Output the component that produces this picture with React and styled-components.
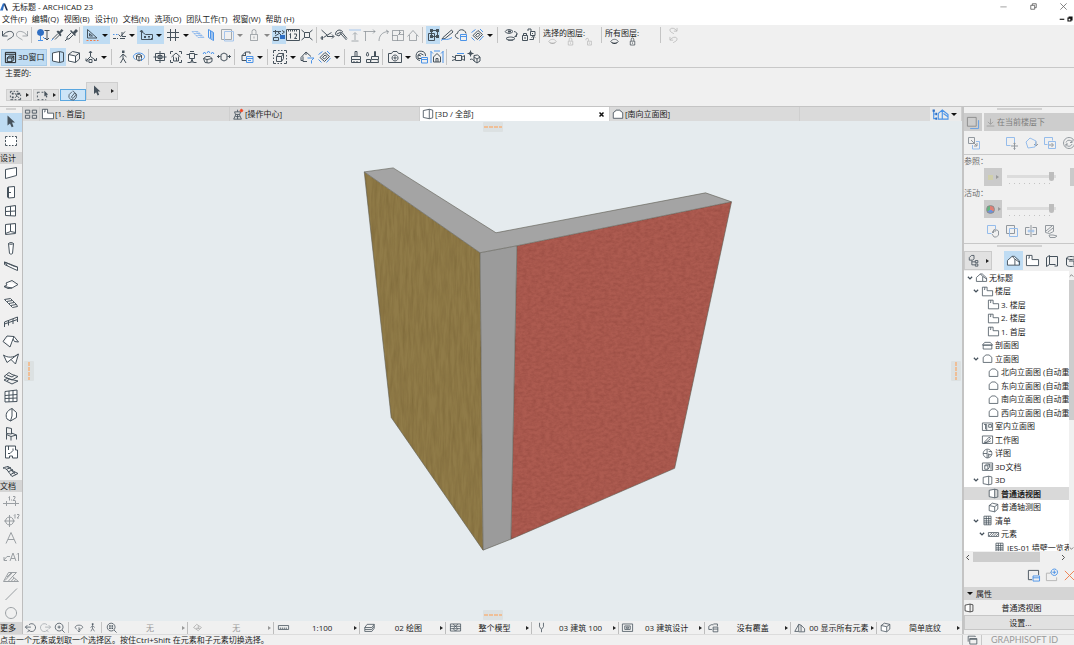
import React, { useState } from "react";
import styled, { createGlobalStyle, css } from "styled-components";

const GlobalStyle = createGlobalStyle`
  * { box-sizing: border-box; }
  body {
    margin: 0;
    background: #f0f0f0;
    color: #1c1c1c;
    font-family: "Open Sans", "Noto Sans CJK SC", sans-serif;
    font-size: 8px;
    line-height: 12px;
    overflow: hidden;
  }
  button, input {
    font: inherit;
    color: inherit;
  }
  ul {
    list-style: none;
    margin: 0;
    padding: 0;
  }
`;

// d: outline, b: blue outline, o: orange outline, f: solid, bf: blue solid, w: white body
const glyphs = {
  logo: { f: "M6 1h3l5 12h-3z", bf: "M0 13L5 1h3l-3 12z" },
  undo: { d: "M1.5 3v5h5M2 7.5C5 2.5 12.5 2 12.5 6.5 12.5 9.5 9 10 6.5 12" },
  redo: { d: "M12.5 3v5h-5M12 7.5C9 2.5 1.5 2 1.5 6.5 1.5 9.5 5 10 7.5 12" },
  find: { d: "M8.5 2.5h5M11 3v9M9 10l2 2 2-2", b: "M4.5 8v4.500M2 12.500h5M7 9l2 2", bf: "M4.5 1a3.500 3.500 0 1 0 .1 0z" },
  pipette: { d: "M8 5.5l-5.5 5.5M9.5 7L5 11.5", b: "M1.5 12.5l2-2", f: "M6.500 3.500l1.500-1 1.500 1L11.500 1 13.500 2.500 10.500 5.500l1 1.500-1 1.500z" },
  syringe: { d: "M7.500 4.500L3 9v2h2l4.500-4.500M1 13l2-2", f: "M6 3l1-1 5 5-1 1zM9 4l3-3 2 2-3 3z" },
  ruler: { d: "M2.500 1.500v8.500h9.500zM4.500 5.500v2.500h3z", o: "M1.500 12.500h2M5 12.500h2M8.500 12.500h2M12 12.500h1.500" },
  guide: { d: "M1 10.500h3M5 10.500h1M8 10.500h5M6.500 6.500l2 2L13 3.500M10 4v4.500h4", b: "M1 6.500h1.500M4 6.500h1.500" },
  coords: { d: "M2.500 2.500v9h11v-5h-7l-4-3M1 4l1.500-2L4 4M5 8l2 2M7 8l-2 2M9 8l1 1 1-1M10 9v1.500M12 10.500h1" },
  grid: { d: "M4.500 1v12M9.500 1v12M1 4.500h12M1 9.500h12" },
  plane: { b: "M1 3.500h6l6 6H7zM3 5.500h6M5 7.500h6M5 3.500l6 6" },
  slab: { b: "M4.500 1.500l5 3v8l-5-3zM6.500 3v7M8 4v7" },
  frame: { d: "M1.500 1.500h10v10h-10z", b: "M4.500 3.500h9v9.500h-9z" },
  lock: { d: "M3.500 6.500h7v6h-7zM5 6V3.500a2 2 0 0 1 4 0V6M7 8.500v2" },
  magnet: { d: "M1 3.500h8M3.500 2v4M10 2.500l2.500 1.500-2.500 2M1.500 9.500h5v3h-5zM3 8l5-3M6 4l3 3", bf: "M8 7h5v4H8z" },
  scale: { d: "M.5 1.500h13v11h-13zM2.500 1.500v2M4.500 1.500v2M6.500 1.500v2M8.500 1.500v2M10.500 1.500v2M3.500 6.500l1-1v5M8 6h2.500v2L8.500 10.500H11" },
  collapse: { d: "M4.500 4.500h5v5h-5zM1.500 2l3 2.500M12.500 2l-3 2.500M1.500 12l3-2.500M12.500 12l-3-2.500" },
  split: { d: "M1.500 2l6 5.500M3.500 9.500l8-5M7 8.500h6.500M12 6.500l2 2-2 2M2.500 8.500a1.500 1.500 0 1 0 .1 3z" },
  axe: { d: "M6.500 5.500l6 6.500M8 4.500l5 6M1.500 6.500c0-4 4-6 7-3L5 8zM3 6l4-2" },
  stretch: { d: "M3.500 13h7M7 12V5M5 6.500L7 4.500l2 2", b: "M1 2h12" },
  corner: { d: "M3.500 13V3.500H13M1.500 3.500h2M11 1.500l2 2-2 2" },
  arc: { d: "M3 13C3 8 6 4 12 3.500M10 2l2.500 1.500L11 6" },
  resize: { d: "M1.500 2.500h11v10h-11zM1.500 7.500h5v5M8.500 2.500v4h4M7 7l3-3" },
  roof: { d: "M1.500 8.500L7 2.500l5.500 6M3.500 7v5.500h7V7" },
  group: { d: "M5.500 2.500h6v6h-6zM2.500 5.500h6v7h-6z", f: "M4 1h3v3H4zM10 1h3v3h-3zM4 7h3v3H4zM10 7h3v3h-3z" },
  pencil: { d: "M3 9.500L11.500 2l1.500 2-8 6.500-3 .5z", b: "M1 12.500c3-3 5 1 11-3" },
  cloud: { d: "M4.500 10.500C.5 10 .5 5.500 3.500 5.500 4 .5 11 .5 12 5.500", b: "M6.500 6.500h6v6h-6zM6.500 8.500h6" },
  diamond: { d: "M3 7.500l5-5 4.500 4-5 5zM5.500 7.500L8 5l2 1.500-2.500 2.500z", b: "M1.500 4.500l4-3M1.500 9.500l3 3M13.500 8l-4 4.500M13 4l-3-3" },
  eyes: { d: "M1 3.500c2-2.500 6-2.500 8 0-2 2.500-6 2.500-8 0zM2 10.500c2-2 7-2 9 0-2 2.500-7 2.500-9 0zM10 3.500c4 1 4 3 1 5M12.500 5.500v3h-2", f: "M4 2.500h3v2H4zM4 11.500h5v1H4z" },
  locks: { d: "M.5 7.500h5v5h-5zM1.500 7V5.500h3V7M8.500 3.500h4.500v4H8.500zM6 3V1h3v2.500M7.500 11.500h4V9M9.500 9.500l2-1.500 1.500 1.500M3 9v2M10.500 5v1" },
  eye: { d: "M1 7c3-4.500 9-4.500 12 0-3 4-9 4-12 0z", f: "M2.500 8.500c2 3 7 3 9 0l1-1.500c-2 2.500-9 2.500-11 0z" },
  unlock: { d: "M5.500 6.500h6v6h-6zM7 6V4a2 2 0 0 0-4 0v1M8.500 8.500v2" },
  window3d: { d: "M1.500 1.500h11v11h-11zM1.500 3.500h11M3.500 7.500h5v4h-5zM3.500 7.500l2-2h5l-2 2M10.500 5.500v4l-2 2" },
  persp: { w: "M2 3l6-1.500v11L2 11z", d: "M1.500 3l7-1.500v11l-7-1.500zM8.500 1.500l4 1v9l-4 1" },
  axon: { w: "M2 5h7v8H2z", d: "M1.500 4.500l7 1.500v6.500l-7-1.500zM1.500 4.500l4-3 7 1.500-4 3M12.500 3v6l-4 3.500" },
  axes: { d: "M6.500 1.500v5L2 11M6.500 6.500l5.500 4M5 3l1.500-2L8 3M2 8.500V11h2.500M12.500 8v2.500H10M5 9.500h3v3H5z" },
  walk: { d: "M7 4v4.500L4.500 13M7 8l3 5M4 7.500l3-3.500 3.500 3", f: "M6 .5h2.500v2.500H6z" },
  orbit: { d: "M4.500 5.500L7 4l2.500 1.500v4L7 11 4.500 9.500zM4.500 5.500L7 7l2.500-1.500M7 7v4", b: "M3.500 9.500C-1 7 2.500 3 7 3s8 4 3.500 6.500M9 8l1.500 1.500L9 11" },
  target: { d: "M2.500 3.500h9v7h-9zM7 1v12M.5 7h13M5 5.500h4v3H5z" },
  housebox: { d: "M1.500 4V1.500H4M10 1.500h2.500V4M12.500 10v2.500H10M4 12.500H1.500V10M2.500 7L7 3l4.500 4M4.500 6.500v4.500h5V6.500M6.500 8h1v3" },
  tripod: { d: "M4.500 3.500h5v5h-5zM1.500 4.500h3M9.500 4.500h3M7 8.500V13M2.500 12.500h3l1.500-3 1.500 3h3M5 1.500h4" },
  cloudup: { d: "M2.500 8.500L5 6.500h4l2 2v3L8 13l-4-.5zM2.500 8.500L6 9.500l5-1M6 9.500V13", b: "M2 4l1.500-2L5 4M6 3l1.500-2L9 3M10 4l1.500-2L13 4" },
  sectionbox: { d: "M0 6.500h3.500M10.500 6.500H14M4 4.500L7 3l3 1.500v5L7 11 4 9.500zM1.500 5v3M12.500 5v3" },
  copybox: { d: "M2 5.500L5.500 2H10v2M2 5.500v5h4M5.500 2v3M2 5.500h4", b: "M6.500 6.500h6.500v6h-6.500zM6.500 8.500h6.500M8 10.500h3" },
  marqueecube: { d: "M.5 3V.5H3M5 .5h1.500M8 .5h1.500M11 .5h2.500V3M13.500 5v1.500M13.500 8v1.500M13.500 11v2.500H11M9 13.500H7.500M6 13.500H4.500M3 13.500H.5V11M.5 9V7.500M.5 6V4.500M3.500 6.500h5v5h-5zM3.500 6.500l2-3h5l-2 3M10.500 3.500v5l-2 3" },
  homefilter: { d: "M1 7.500l5-5.500 5 4.500M3 6.500v5h4M1 7.500v3h2M6 2v3", b: "M7.500 8h6.500L11.500 10.500v3" },
  brush: { d: "M6 1.500h2v5M6 1.500v5M2.500 6.500h9v3h-9zM2.500 9.500v3h9v-3M5 11v1.500M8 11v1.500" },
  brushes: { d: "M2.500 2C1 4.500 1 6 2.500 6S4 4.500 2.500 2zM1.500 9.500h4v3h-4zM9.500 1.500h1v5M9.500 1.500v5M6.500 6.500h7v3h-7zM6 9.500l-.5 3h8l-.5-3" },
  camera: { d: "M.5 3.500h3l1.500-2h4l1.500 2h3v9H.5zM7 5a3 3 0 1 0 .1 0zM7 7a1 1 0 1 0 .1 0z" },
  orbitcopy: { d: "M6 10.500A4.700 4.700 0 1 1 11.500 6M4 5l2.500-1.500 3 1.500M4 5v3.500h3M4 5l3 1", b: "M7.500 7.500h6v5.500h-6zM7.500 9.500h6" },
  planhouse: { d: "M3.500 7L7 3.500 10.500 7v5h-7zM6 12V8.500h2V12", b: "M1 1v12M13 1v12M1 1.500l2 2M13 1.500l-2 2M4 1h6" },
  video: { d: "M4.500 5.500h6v5h-6zM10.500 7.500l3-2v5l-3-2M1 6.500l3 1M1 10.500l3-1", b: "M6 3.500h7" },
  gears: { d: "M3.500 2a1.500 1.500 0 1 0 .1 0zM3.500.5v6M.5 3.500h6M7 5.500l3.500-.5L13 7v4l-3 2-3-2zM7 7l3 2 3-2M10 9v4M3 9.500c2-1 3 0 4 1.500" },
  pick: { d: "M1.500 4.500v-2h2M5 2.500h1.500M8 2.500h2M1.500 11.500h3M6 11.500h2M10 11.500h2.500v-2M1.500 7v2M12.500 6v1.500M6.500 4.500l2 3-2 2M9 8l2 1.500M8 5.500h3", f: "M3 4h2v2H3zM3 8h2v2H3zM9 4h3v2H9z" },
  marquee: { w: "M2 3h10v8H2z", d: "M1.500 4.500v-2h2M5 2.500h1.500M8 2.500h1.500M11 2.500h1.500v2M12.500 6v2M12.500 9.500v2H11M9.500 11.500H8M6.500 11.500H5M3.500 11.500h-2v-2M1.500 8V6" },
  marqueepick: { d: "M1.500 5V3.500H4M6 3.500h2M1.500 7v2M1.500 11.500h2M6 11.500h2M10 11.500h1M11.500 9V7", f: "M9 2l4 4-2 .5 1 2-1 .5-1-2-1 1z" },
  clip: { d: "M9 4.500a4.500 4.500 0 1 1-6.500 2L6 3M5 9.500l4-5 2 1.500-4 5zM7 2l2 2.500" },
  arrow: { f: "M3.500.5l7.500 7H8l1.500 4-1.800.8-1.700-3.800-2.500 2z" },
  overview: { d: "M.5 2.500h5v3.500h-5zM8.500 2.500h5v3.500h-5zM.5 8.500h5v3.500h-5zM8.500 8.500h5v3.500h-5z" },
  story: { w: "M1 2h5v4h7v6H1z", d: "M.5 1.500h6v4.500h7v6.500H.5zM3.500 1.500v3h-1" },
  house: { w: "M1 7l5-5 6 5v5H1z", d: "M.5 12v-5l5-4.500 3 3V12zM5.500 2.500h2.500l5.500 5V12h-5M8.500 5.500l5 3.500" },
  elevation: { w: "M1.500 6L7 2.500 12.500 6v6h-11z", d: "M1.500 12V5.500l3.500-3h4l3.500 3V12z" },
  section: { w: "M1.500 6h11v6h-11z", d: "M1.500 11.500v-5h11v5zM.5 6.500l3-3.500h7l3 3.500z" },
  interior: { d: "M.5 2.500h13v9.500H.5zM2.500 4.500h3.500v7.500M4.500 4.500v6M8.500 4.500h3.500v3.500H8.500z" },
  worksheet: { d: "M.5 2.500h13v9.500H.5zM3 10.500L9 4l2 1.500-6 5.500zM2 12l9-3" },
  detail: { d: "M7 1.500a5.500 5.500 0 1 0 .1 0zM1.500 7h5M6.500 2v11M8.500 4.500h4M8.500 7v5M8.500 8.500h4" },
  doc3d: { d: "M.5 2.500h13v9.500H.5zM3.500 6h4v4.500h-4zM3.500 6l2-2h4l-2 2M9.500 4v4l-2 2.500M11.500 4v7" },
  schedule: { d: "M2.500 1.500h9v11h-9zM2.500 4.500h9M2.500 7.500h9M2.500 10h9M5.500 1.500v11M8.500 1.500v11" },
  hatch: { d: "M.5 4.500h13v5H.5zM1 9l4-4M4 9l4-4M7 9l4-4M10 9l3.500-3.500" },
  actioncenter: { d: "M3 4.500h7l-1 3H4zM4.500 7.500L2 13h9l-2.500-5.500M4 10h5M6.500 2v2.500M6.500 8v5", r: "M11 1.500a1.500 1.500 0 1 0 .1 0z" },
  navhouse: { b: "M1.500 4v7h2M1.500 7h2M5.500 11.500V6.500L9 3.500l5 4v4zM9 3.500v8M10 6.500l4 3", bf: "M.5 3h2v2h-2zM3 6h1.500v2H3zM3 10h1.500v2H3z" },
  wall: { w: "M1 4l11-3v9L1 13z", d: "M1.500 3.500l11-2v8l-11 3z" },
  door: { w: "M4 2h6v11H4z", d: "M4.500 2l6-.5v11l-6 .5zM4.500 2l-1 .5V12l1 1M5 7.500h2" },
  win: { w: "M2 3h10v9H2z", d: "M1.500 3l10-1.500v10.500l-10-.5zM6.500 2v10M1.500 7.500l10-.5" },
  corwin: { w: "M2 3h10v9H2z", d: "M1.500 2.500l10-1v10l-10 1zM6.500 2v7.500M1.500 11.500l5-2 5 1" },
  column: { w: "M5 2h4v11H5z", d: "M4.500 2.500l1 10c1 .8 2 .8 3 0l1-10c-1-1.200-4-1.200-5 0 1 1 4 1 5 0" },
  beam: { w: "M1 3l12 5v3L1 6z", d: "M.5 3l13 5v3.500L10 10 .5 5.500zM.5 3l3 3.500M.5 3l10 4.500 3 .5" },
  slabtool: { w: "M1 8l4-4 8 3-4 3z", d: "M0 8.500l3-1.500-1-2 6-2.500 6 4-6 3.500zM0 8.500l4 2 4-.5" },
  stair: { w: "M2 3l11 7-4 2-7-6z", d: "M.5 3.500l6-1 2 2-6 1zM2.500 5.500l2 2 6-1-2-2M4.500 7.500l2 2 6-1-2-2M6.500 9.500l2 2 5-1-1-2" },
  rail: { d: "M.5 7l13-5v5M.5 7v5M.5 9l13-4.500M4.500 5.500v5M9 4v5" },
  rooftool: { w: "M1 7l4-5 5 1 3 5-3-1-4 5z", d: "M-1 7.500l4-5.500 7 .5 4.500 5.500-4-.5L9 5l-3 8zM10 2.500L9 5" },
  shell: { w: "M1 3c3 3 8 3 12-1l-2 9-4-4-4 4z", d: "M-.5 3c4 3 10 3 15-1l-3 10-4.500-4.500-4 3zM7 7.500l7-5.500" },
  mesh: { d: "M0 5.500l5-4 3 2 6 2-6 3.500zM0 9l3-1.500 11 2.500-6 3zM3 4l5 2 3-2M3 10l2-1.500" },
  curtain: { w: "M1 2h11v10H1z", d: "M1 2.500l12-1.500v11.500l-12 .5zM5 2v11M9 1.500v11M1 6.500l12-1M1 9.500l12-.5" },
  morph: { w: "M3 5l5-3 4 3-1 5-4 3-4-3z", d: "M8 .5C2.500 2.500 1 7 3 11l3.500 2L8 8 8 .5l4.500 4v5l-6 3.500" },
  chair: { d: "M2.500.5l5 1v5.500l-5-.5zM2.500 6.500v6M2.500 7.500L7 9.500v4M7 9.500l5.500-1.500v4.500M7.500 6l5 2" },
  zone: { w: "M2 2h9v3h2v7H2z", d: "M1.500 1h10v4h2v8h-5v-2h-3v2h-4zM4.500 1v4M4 8.500h2l3-3v-2" },
  meshcurve: { d: "M-1 4c5-2 6-2 10 3l5 2.500M-1 4c4 0 6 5 9 8.500l6-3M3 2.500c3 0 5 6 9 8.500M2 5.500l5-2M4 8l5-2.500M6 11l5-3" },
  dimension: { d: "M-1 9.500h16M2.500 7v5M11.500 7v5M4.500 3.500l1-1v4M7.500 5.500v1M9 2.500h2v1.500L9 6.500h2.500" },
  level: { d: "M5.500 4a4 4 0 1 0 .1 0zM5.500 2v12M0 8h11M10 2.500l1-1v4M13 1.500h2V3l-2 2h2" },
  textA: { d: "M2 12.500l5-11 5 11M4 8.500h6" },
  label: { d: "M0 10l3-3.500h3M0 7v3.500h3M6 11l3-8 3 8M7 8.500h4M13 4.500l1.500-1.500v8" },
  fill: { d: "M-.5 12.500l5-9h8l-4 4 6 5zM1 11.500l7-7.500M4 12.500l5-5.500M7 12.500l3-3.500M10 12.500l1.500-2M3 8l4-4" },
  line: { d: "M1.500 13L13 1.500" },
  circle: { d: "M7 1.500a5.500 5.500 0 1 0 .1 0z" },
  zoomprev: { d: "M5 3.500a5 5 0 1 1-1 6M3 13l3-3M.5 6.500h7M3 4l-2.500 2.500 2.500 2.500" },
  zoomnext: { d: "M9 3.500a5 5 0 1 0 1 6M11 13l-3-3M13.500 6.500h-7M11 4l2.500 2.500-2.500 2.500" },
  zoomin: { d: "M6.500 1.500a5 5 0 1 0 .1 0zM10 10l3.500 3.500M4.500 6.500h4M6.500 4.500v4" },
  zoomfit: { d: "M6.500 1.500a5 5 0 1 0 .1 0zM10 10l3.500 3.500", f: "M4 4h2v2H4zM7 4h2v2H7zM4 7h2v2H4zM7 7h2v2H7z" },
  pan: { d: "M4 8.500C-.5 7 2 3 7 3s7.500 4 2 5.500L7 9M7 6v6M5 10.500l2 2 2-2" },
  rulerbar: { d: "M.5 4.500h13v5H.5zM3 9V7M5.500 9V7M8 9V7M10.500 9V7" },
  layers: { d: "M1 7l3-4h9l-3 4zM1 9.500v-2.500M1 9.500h9l3-4V3M1 9.500V12h9l3-4V5.500" },
  model: { d: "M.5 2.500h13v9H.5zM.5 5.500h13M.5 8.500h13M4 2.500l3 3-3 3 3 3M10 2.500l-3 3 3 3-3 3" },
  pen: { d: "M4.500 1v5l2.500 3.500 2.500-3.500V1M7 9.500V13" },
  mvo: { d: "M.5 2.500h13v9.500H.5zM3.500 5h7v4.500h-7zM5.500 6.500h3v1.500h-3z" },
  override: { d: "M1 9.500V5.500l3-2h3M6.500 6.500h6v6h-6zM6.500 9h6M7 2.500h5v3M1 9.500h4" },
  reno: { d: "M1 12L6 3v9zM6 12.500h7.500v-4L9 4v8M6 3l3 1" },
  rotateq: { d: "M2 7l4-4 6 4-4 4zM5 8h5M8 5v4" },
  trace: { d: "M1.500 1.500h9.500v9.500h-9.500z", b: "M13.500 4.500v9h-9" },
  download: { d: "M7 1v8.500M3 6l4 4 4-4M1 12.500h12" },
  swap: { d: "M1.500 1.500h6v6h-6zM4 4l6 6M10 7v3H7", b: "M9 5.500h3.500v7.500h-7V9" },
  moveref: { b: "M1.500 1.500h8v5M1.500 1.500v8h4", d: "M9.500 6.500v7M6 10h7M8.500 7.500l1-1 1 1M8.500 12.500l1 1 1-1" },
  rotref: { b: "M2 6l4-4 6 3-1 6-7 1z", d: "M12 5.500v4M10 8l2 2 2-2" },
  copyref: { b: "M1.500 1.500h8v3M1.500 1.500v7h3M5.500 5.500h7v7h-7z", d: "M6 9h4M8.500 7l2 2-2 2" },
  refresh: { d: "M7 1.500a5.500 5.500 0 1 0 .1 0zM4 6.500c1-3 5-3 6 0M10 8c-1 3-5 3-6 0M10 4v2.500H8M4 10.500V8h2" },
  handref: { b: "M9.500 5v-3.500h-8v8h4", d: "M6.500 9V7.500l1-1V9M7.500 8V6l1.500-.5V8M9 6h2l1.500 1v4l-2 2H8l-2-3" },
  overlap: { d: "M1.500 1.500h8v8h-8z", b: "M4.500 4.500h8v8h-8z" },
  mirror: { d: "M7 1v12M5.500 3.500h-4v7h4M8.500 3.500h4v7h-4", b: "M3.500 7h7M5 5.500v3M9 5.500v3" },
  handfill: { d: "M2.500 1.500h8v6l-4 2-4-1zM3 7l6-5M5 8l5-4M6 11h4l4 1-2 1.500H7z" },
  orgtree: { d: "M4 .5L1.500 3v3h4l1.500-1.500v-4zM4.500 6.500v5H8M8.500 6.500h3v2.500h-3zM8.500 10.500h3v2.500h-3zM4.500 8h4" },
  layout: { d: "M1.500 3.500l3-2v9l-3 2zM4.500 2.500h8v8M4.500 10.500h6M12.500 8v4h-3" },
  publish: { d: "M2.500 4v7c1 2 8 2 9 0V4M2.500 4c1-2 8-2 9 0-1 2-8 2-9 0M5 7h5v4" },
  saveview: { d: "M1.500 1.500h11v5M1.500 1.500v10h4", b: "M6.500 7.500h7v5.500h-7zM6.500 9.500h7" },
  newview: { d: "M1.500 12.500v-8h4l1-1.500M12.500 9v3.500h-11", b: "M10 0a3.500 3.500 0 1 0 .1 0zM8 3.500h4M10 1.500v4" },
  remove: { o: "M2 2l10 10M12 2L2 12" },
  stack: { d: "M1.500 8.500v-7h9v1M3.500 10.500v-6h9v7h-9zM3.500 5.500h9" },
  minimize: { d: "M3 7.500h8" },
  restore: { d: "M3.500 5.500h5v5h-5zM5.500 5.500v-2h5v5h-2" },
  close: { d: "M3 3l8 8M11 3l-8 8" },
  chevron: { d: "M2 4l5 5 5-5" },
};

const Svg = styled.svg`
  display: block;
  flex: none;
  fill: none;
  stroke-width: ${(p) => p.$weight};
  overflow: visible;
`;

const Icon = ({ name, size = 14, weight = 1 }) => {
  const g = glyphs[name];
  return (
    <Svg viewBox="0 0 14 14" width={size} height={size} $weight={weight} aria-hidden="true">
      {g.w && <path d={g.w} fill="#fff" />}
      {g.d && <path d={g.d} stroke="currentColor" />}
      {g.b && <path d={g.b} stroke="#4b93e8" />}
      {g.o && <path d={g.o} stroke="#f07c4a" />}
      {g.f && <path d={g.f} fill="currentColor" />}
      {g.bf && <path d={g.bf} fill="#2f6fc4" />}
      {g.r && <path d={g.r} fill="#f4411e" stroke="#f4411e" />}
    </Svg>
  );
};

const Window = styled.div`
  display: flex;
  flex-direction: column;
  height: 100vh;
`;

const TitleBar = styled.header`
  display: flex;
  align-items: center;
  height: 13px;
  background: #fff;
  color: #20304f;
`;

const Title = styled.h1`
  flex: 1;
  margin: 0 0 0 4px;
  color: #1c1c1c;
  font-size: 8px;
  font-weight: 400;
`;

const WindowButtons = styled.div`
  display: flex;
  gap: ${(p) => p.$gap || 0}px;
  padding-right: ${(p) => p.$end || 0}px;
`;

const PlainButton = styled.button`
  display: flex;
  align-items: center;
  justify-content: center;
  flex: none;
  padding: 0;
  border: 0;
  background: none;
  color: ${(p) => p.$color || "#46525c"};
`;

const MenuBar = styled.nav`
  display: flex;
  align-items: center;
  justify-content: space-between;
  height: 12px;
  padding-left: 2px;
  background: #fff;
`;

const MenuList = styled.ul`
  display: flex;
  gap: 5px;
`;

const MenuLink = styled.a`
  color: inherit;
  text-decoration: none;
  white-space: nowrap;
`;

const Toolbars = styled.div`
  height: 43px;
  border-bottom: 1px solid #c8c8c8;
  overflow: hidden;
`;

const ToolRow = styled.div`
  display: flex;
  align-items: center;
  height: ${(p) => p.$height}px;
  padding-left: 1px;
`;

const ToolButton = styled.button`
  display: flex;
  flex: none;
  align-items: center;
  justify-content: center;
  width: ${(p) => p.$w}px;
  height: 18px;
  padding: 0;
  border: 0;
  background: ${(p) => (p.$active ? "#bfdcf3" : "transparent")};
  color: #46525c;
  ${(p) => p.$dim && css`svg { opacity: 0.45; }`}
`;

const IconSlot = styled.span`
  display: flex;
  flex: 1;
  justify-content: center;
  min-width: 0;
`;

const Caret = styled.span`
  width: 0;
  margin: 0 2px 0 1px;
  border: 3px solid transparent;
  border-bottom-width: 0;
  border-top-color: ${(p) => (p.$dim ? "#888" : "#111")};
`;

const SideCaret = styled.span`
  border: 2px solid transparent;
  border-right-width: 0;
  border-left: 3px solid ${(p) => (p.$dim ? "#999" : "#222")};
`;

const Separator = styled.span`
  flex: none;
  width: 1px;
  height: ${(p) => p.$height || 16}px;
  margin: 0 3px 0 2px;
  background: #c4c4c4;
`;

const View3dButton = styled.button`
  display: flex;
  align-items: center;
  gap: 1px;
  height: 17px;
  width: 46px;
  margin: 0 3px 0 0;
  padding: 0 2px;
  border: 1px solid #a9cdea;
  background: #bfdcf3;
  white-space: nowrap;
`;

const LayerGroup = styled.div`
  width: ${(p) => p.$w}px;
  height: 19px;
`;

const LayerTitle = styled.div`
  height: 11px;
  line-height: 13px;
  white-space: nowrap;
`;

const LayerIcons = styled.div`
  display: flex;
  gap: 9px;
  padding-left: 5px;
`;

const InfoBox = styled.section`
  height: 39px;
  padding-left: 5px;
  border-bottom: 1px solid #c4c4c4;
`;

const InfoLabel = styled.div`
  height: 10px;
  line-height: 10px;
`;

const InfoButtons = styled.div`
  display: flex;
  align-items: flex-end;
  height: 23px;
  padding-left: 1px;
`;

const InfoButton = styled.button`
  display: flex;
  align-items: center;
  justify-content: center;
  gap: ${(p) => (p.$tall ? 8 : 4)}px;
  width: ${(p) => (p.$tall ? 32 : 26)}px;
  height: ${(p) => (p.$tall ? 18 : 12)}px;
  margin: ${(p) => (p.$tall ? "0 0 1px" : p.$active ? 0 : "0 1px 0 0")};
  padding: 0;
  border: 1px solid ${(p) => (p.$active ? "#5aa7e0" : "#cfcfcf")};
  background: ${(p) => (p.$active ? "#cce4f7" : "#e1e1e1")};
  color: #46525c;
`;

const Body = styled.div`
  display: flex;
  flex: 1;
  min-height: 0;
`;

const Toolbox = styled.aside`
  display: flex;
  flex-direction: column;
  width: 23px;
  border-right: 1px solid #bdbdbd;
`;

const Grip = styled.div`
  flex: none;
  width: ${(p) => p.$w}px;
  height: 2px;
  margin: 1px auto 3px;
  background: #d2d2d2;
`;

const ToolboxTool = styled.button`
  display: flex;
  flex: 1 1 0;
  align-items: center;
  justify-content: center;
  min-height: 0;
  padding: 0;
  border: 0;
  background: ${(p) => (p.$active ? "#bfdcf3" : "transparent")};
  color: ${(p) => (p.$dim ? "#9a9fa3" : "#46525c")};
`;

const ToolboxLabel = styled.div`
  flex: none;
  height: 12px;
  margin-top: ${(p) => (p.$spaced ? 2 : 0)}px;
  background: #d5d5d5;
  white-space: nowrap;
  overflow: hidden;
`;

const Workspace = styled.main`
  display: flex;
  flex: 1;
  flex-direction: column;
  min-width: 0;
`;

const TabBar = styled.div`
  display: flex;
  flex: none;
  height: 14px;
  background: #dadada;
`;

const Tab = styled.button`
  display: flex;
  flex: 0 1 190px;
  align-items: center;
  gap: 1px;
  min-width: 0;
  padding: 0 4px 0 2px;
  border: 0;
  border-right: 1px solid #cfcfcf;
  background: ${(p) => (p.$active ? "#fff" : "transparent")};
  color: #46525c;
  white-space: nowrap;
`;

const TabName = styled.span`
  flex: 1;
  color: #1c1c1c;
  text-align: left;
`;

const TabClose = styled.span`
  color: #111;
`;

const TabEnd = styled.span`
  flex: 1 1 0;
`;

const CornerButton = styled.button`
  display: flex;
  flex: none;
  align-items: center;
  justify-content: center;
  gap: 2px;
  width: ${(p) => p.$w}px;
  padding: 0;
  border: 0;
  border-right: 1px solid #cfcfcf;
  background: ${(p) => (p.$light ? "#ebebeb" : "transparent")};
  color: #46525c;
`;

const Viewport = styled.div`
  position: relative;
  flex: 1;
  min-height: 0;
  background: #e5ebee;
`;

const Scene = styled.svg`
  display: block;
  width: 100%;
  height: 100%;
`;

const edges = {
  top: css`top: 1px; left: 50%; width: 20px; height: 10px; margin-left: -10px;`,
  bottom: css`bottom: 1px; left: 50%; width: 20px; height: 10px; margin-left: -10px;`,
  left: css`left: 1px; top: 50%; width: 10px; height: 20px; margin-top: -10px;`,
  right: css`right: 1px; top: 50%; width: 10px; height: 20px; margin-top: -10px;`,
};

const dashes = (angle) => css`
  background: repeating-linear-gradient(${angle}, #efbf97 0 4px, transparent 4px 5px);
`;

const EdgeHandle = styled.span`
  position: absolute;
  display: flex;
  align-items: center;
  justify-content: center;
  border-radius: 1px;
  background: #dce1e2;
  ${(p) => edges[p.$side]}

  &::after {
    content: "";
    ${(p) =>
      p.$side === "top" || p.$side === "bottom"
        ? css`width: 18px; height: 2px; ${dashes("90deg")}`
        : css`width: 2px; height: 18px; ${dashes("180deg")}`}
  }
`;

const QuickOptions = styled.div`
  display: flex;
  flex: none;
  align-items: center;
  height: 13px;
`;

const QuickTools = styled.div`
  display: flex;
  align-items: center;
  width: 79px;
`;

const QuickSelector = styled.button`
  display: grid;
  grid-template-columns: 18px 1fr 7px;
  flex: 1 1 0;
  align-items: center;
  justify-items: center;
  min-width: 0;
  height: 12px;
  padding: 0;
  border: 0;
  border-right: 1px solid #bdbdbd;
  background: none;
  color: ${(p) => (p.$dim ? "#9a9a9a" : "#1c1c1c")};
  white-space: nowrap;

  svg { color: ${(p) => (p.$dimIcon ? "#aaa" : "#46525c")}; }
  &:last-child { border-right: 0; }
`;

const SidePanel = styled.aside`
  display: flex;
  flex: none;
  flex-direction: column;
  width: 112px;
  border-left: 2px solid #c4c4c4;
  overflow: hidden;
`;

const TraceHeader = styled.div`
  display: flex;
  gap: 2px;
  height: 18px;
  flex: none;
`;

const TraceButton = styled.button`
  display: flex;
  flex: ${(p) => (p.$grow ? 1 : "none")};
  align-items: center;
  gap: 2px;
  padding: 0 3px 0 2px;
  border: 0;
  background: #cdcdcd;
  color: #7c7c7c;
  white-space: nowrap;
  svg { opacity: 0.8; }
`;

const PanelIcons = styled.div`
  display: flex;
  flex: none;
  gap: 5px;
  align-items: center;
  height: ${(p) => p.$height}px;
  padding-left: ${(p) => p.$start}px;
  border-bottom: 1px solid #c8c8c8;
  button { opacity: 0.55; }
  button:first-child { margin-right: ${(p) => p.$split || 0}px; }
`;

const TraceLabel = styled.label`
  flex: none;
  height: 13px;
  color: #6c6c6c;
`;

const TraceRow = styled.div`
  display: flex;
  flex: none;
  gap: 5px;
  height: 19px;
  padding-left: 20px;
`;

const ColorButton = styled.button`
  display: flex;
  flex: none;
  align-items: center;
  justify-content: center;
  gap: 3px;
  width: 18px;
  height: 18px;
  padding: 0;
  border: 0;
  background: #cacaca;
`;

const Swatch = styled.span`
  width: ${(p) => (p.$round ? 9 : 5)}px;
  height: ${(p) => (p.$round ? 9 : 5)}px;
  border: ${(p) => (p.$round ? "1px solid #8a8a8a" : "0")};
  border-radius: ${(p) => (p.$round ? "50%" : "0")};
  background: ${(p) => (p.$round ? "conic-gradient(#e07f74 120deg, #6f92d8 120deg 240deg, #62b57f 240deg)" : "#d0cfac")};
`;

const SliderBox = styled.div`
  flex: none;
  width: 49px;
  margin-right: 9px;
  padding-top: 4px;
`;

const Slider = styled.input`
  display: block;
  width: 100%;
  height: 9px;
  margin: 0;
  appearance: none;
  background: linear-gradient(#dcdcdc, #dcdcdc) center / 100% 3px no-repeat;

  &::-webkit-slider-thumb {
    appearance: none;
    width: 5px;
    height: 9px;
    border-radius: 0 0 3px 3px;
    background: #bdbdbd;
  }
`;

const Ticks = styled.div`
  height: 1px;
  margin: 2px 2px 0;
  background: repeating-linear-gradient(90deg, #c4c4c4 0 1px, transparent 1px 5px);
`;

const NavTabs = styled.div`
  display: flex;
  flex: none;
  align-items: center;
  height: 21px;
`;

const NavTab = styled.button`
  display: flex;
  flex: none;
  align-items: center;
  justify-content: center;
  gap: 6px;
  width: ${(p) => (p.$menu ? 28 : 19)}px;
  height: 19px;
  margin-right: ${(p) => (p.$menu ? 12 : 0)}px;
  padding: 0;
  border: ${(p) => (p.$menu ? "1px solid #cacaca" : "0")};
  background: ${(p) => (p.$active ? "#bfdcf3" : p.$menu ? "#e1e1e1" : "transparent")};
  color: #46525c;
`;

const TreeFrame = styled.div`
  display: grid;
  flex: 1;
  grid-template-columns: 1fr 5px;
  grid-template-rows: 1fr 12px;
  min-height: 0;
`;

const Tree = styled.ul`
  min-width: 0;
  background: #fff;
  overflow: hidden;
`;

const TreeRow = styled.li`
  display: flex;
  align-items: center;
  gap: 2px;
  height: 13px;
  padding-left: ${(p) => p.$level * 6 + 2}px;
  background: ${(p) => (p.$selected ? "#d9d9d9" : "transparent")};
  font-weight: ${(p) => (p.$selected ? 700 : 400)};
  color: #1c1c1c;
  white-space: nowrap;
  svg { color: #46525c; }
  &:nth-child(even) { height: 14px; }
`;

const TreeToggle = styled.span`
  display: flex;
  flex: none;
  justify-content: center;
  width: 8px;
`;

const VScroll = styled.div`
  display: flex;
  flex-direction: column;
  align-items: center;
  justify-content: space-between;
  color: #555;

  &::before {
    content: "";
    order: 1;
    width: 5px;
    height: 50%;
    margin-bottom: auto;
    background: #cdcdcd;
  }
  & > :first-child { transform: rotate(180deg); margin: 2px 0; }
  & > :last-child { order: 2; }
`;

const HScroll = styled.div`
  display: flex;
  grid-column: 1 / -1;
  align-items: center;
  justify-content: space-between;
  padding: 0 7px 0 0;
  color: #555;

  &::before {
    content: "";
    order: 1;
    width: 67px;
    height: 10px;
    margin-right: auto;
    background: #cdcdcd;
  }
  & > :first-child { transform: rotate(90deg); margin-right: 2px; }
  & > :last-child { order: 2; transform: rotate(-90deg); }
`;

const ViewActions = styled.div`
  display: flex;
  flex: none;
  align-items: center;
  justify-content: flex-end;
  gap: 5px;
  height: 24px;
  margin-right: -2px;
`;

const PropertiesTitle = styled.button`
  display: flex;
  flex: none;
  align-items: center;
  gap: 1px;
  height: 13px;
  padding: 0 0 0 2px;
  border: 0;
  background: #d5d5d5;
`;

const PropertyRow = styled.div`
  display: flex;
  flex: none;
  align-items: center;
  height: 15px;
  padding: 0 5px 0 0;
`;

const PropertyName = styled.span`
  flex: 1;
  text-align: center;
`;

const SettingsButton = styled.button`
  flex: none;
  height: 15px;
  margin: 0 -3px 4px 0;
  padding: 0;
  border: 1px solid #c6c6c6;
  background: #e1e1e1;
`;

const StatusBar = styled.footer`
  display: flex;
  flex: none;
  height: 11px;
  border-top: 1px solid #dcdcdc;
  line-height: 10px;
  white-space: nowrap;
`;

const StatusText = styled.span`
  flex: 1;
`;

const Brand = styled.a`
  display: flex;
  align-items: center;
  gap: 3px;
  width: 112px;
  padding-left: 4px;
  border-left: 1px solid #c8c8c8;
  color: #9a9a9a;
  font-family: Lato, sans-serif;
  font-size: 9px;
  text-decoration: none;
  svg { color: #46525c; }
`;

const BrandName = styled.span`
  padding-left: 9px;
  border-left: 1px solid #c8c8c8;
`;

const menus = ["文件(F)", "编辑(Q)", "视图(B)", "设计(I)", "文档(N)", "选项(O)", "团队工作(T)", "视窗(W)", "帮助 (H)"];

const firstRow = [
  ["undo"], ["redo", { dim: true }], "|",
  ["find", { w: 15 }], ["pipette"], ["syringe", { w: 13 }], "|",
  ["ruler", { menu: true, active: true }], ["guide", { menu: true }],
  ["coords", { menu: true, active: true }], ["grid", { menu: true }],
  ["plane", { w: 13, dim: true }], ["slab"], ["frame", { menu: true, dim: true }],
  ["lock", { menu: true, dim: true }], ["magnet", { active: true }], ["scale"], ["collapse"], "|",
  ["split"], ["axe"], ["stretch", { dim: true }], ["corner", { dim: true }], ["arc", { dim: true }],
  ["resize", { w: 16, dim: true }], ["roof", { dim: true }], "|",
  ["group", { active: true }], ["pencil"], ["cloud"], ["diamond", { menu: true }], "|",
  ["eyes", { w: 19 }], ["locks", { w: 17 }], "|",
];

const secondRow = [
  ["persp", { w: 16, active: true }], ["axon", { w: 16 }], ["axes", { menu: true }], "|",
  ["walk", { w: 16 }], ["orbit", { w: 15 }], "|",
  ["target", { w: 16 }], ["housebox", { w: 16 }], ["tripod", { w: 16 }], ["cloudup", { w: 16 }],
  ["sectionbox", { w: 16 }], "|",
  ["copybox", { menu: true }], "|",
  ["marqueecube", { menu: true }], ["homefilter", { w: 17 }], ["diamond", { menu: true }], "|",
  ["brush", { w: 16 }], ["brushes", { w: 16 }], "|",
  ["camera", { menu: true }], ["orbitcopy", { w: 16 }], ["planhouse", { w: 15 }], "|",
  ["video", { w: 16 }], ["gears", { w: 16 }],
];

const designTools = [
  "wall", "door", "win", "corwin", "column", "beam", "slabtool", "stair", "rail",
  "rooftool", "shell", "mesh", "curtain", "morph", "chair", "zone", "meshcurve",
];

const documentTools = ["dimension", "level", "textA", "label", "fill", "line", "circle"];

const tabs = [
  { icon: "story", name: "[1. 首层]" },
  { icon: "actioncenter", name: "[操作中心]" },
  { icon: "persp", name: "[3D / 全部]" },
  { icon: "elevation", name: "[南向立面图]" },
];

const quickOptions = [
  { icon: "zoomfit", text: "无", dim: true },
  { icon: "rotateq", text: "无", dim: true, dimIcon: true },
  { icon: "rulerbar", text: "1:100" },
  { icon: "layers", text: "02 绘图" },
  { icon: "model", text: "整个模型" },
  { icon: "pen", text: "03 建筑 100" },
  { icon: "mvo", text: "03 建筑设计" },
  { icon: "override", text: "没有覆盖" },
  { icon: "reno", text: "00 显示所有元素" },
  { icon: "axon", text: "简单底纹" },
];

const treeItems = [
  [0, "house", "无标题", true],
  [1, "story", "楼层", true],
  [2, "story", "3. 楼层"],
  [2, "story", "2. 楼层"],
  [2, "story", "1. 首层"],
  [1, "section", "剖面图"],
  [1, "elevation", "立面图", true],
  [2, "elevation", "北向立面图 (自动重"],
  [2, "elevation", "东向立面图 (自动重"],
  [2, "elevation", "南向立面图 (自动重"],
  [2, "elevation", "西向立面图 (自动重"],
  [1, "interior", "室内立面图"],
  [1, "worksheet", "工作图"],
  [1, "detail", "详图"],
  [1, "doc3d", "3D文档"],
  [1, "persp", "3D", true],
  [2, "persp", "普通透视图"],
  [2, "axon", "普通轴测图"],
  [1, "schedule", "清单", true],
  [2, "hatch", "元素", true],
  [3, "schedule", "IES-01 墙壁一览表"],
];

const Tools = ({ items }) =>
  items.map((item, i) => {
    if (item === "|") return <Separator key={i} />;
    const [name, { w = 14, menu, active, dim } = {}] = item;
    return (
      <ToolButton key={i} $w={menu ? 27 : w} $active={active} $dim={dim} aria-label={name}>
        <IconSlot>
          <Icon name={name} />
        </IconSlot>
        {menu && <Caret $dim={dim} />}
      </ToolButton>
    );
  });

const Model = () => (
  <Scene viewBox="0 0 939 501" role="img" aria-label="3D">
    <defs>
      <filter id="plaster" x="0" y="0" width="1" height="1" colorInterpolationFilters="sRGB">
        <feTurbulence type="fractalNoise" baseFrequency="0.22 0.35" numOctaves="3" seed="4" />
        <feColorMatrix values="0 0 0 0 0.3  0 0 0 0 0.08  0 0 0 0 0.06  0.3 0 0 0 -0.1" />
        <feComposite in2="SourceGraphic" operator="in" result="cut" />
        <feMerge>
          <feMergeNode in="SourceGraphic" />
          <feMergeNode in="cut" />
        </feMerge>
      </filter>
      <filter id="wood" x="0" y="0" width="1" height="1" colorInterpolationFilters="sRGB">
        <feTurbulence type="fractalNoise" baseFrequency="0.35 0.04" numOctaves="3" seed="9" result="grain" />
        <feColorMatrix in="grain" values="0 0 0 0 0.25  0 0 0 0 0.17  0 0 0 0 0.03  0.3 0 0 0 -0.1" result="tint" />
        <feComposite in="tint" in2="SourceGraphic" operator="in" result="cut" />
        <feMerge>
          <feMergeNode in="SourceGraphic" />
          <feMergeNode in="cut" />
        </feMerge>
      </filter>
    </defs>
    <polygon points="341,51 457,132 460,430 368,297" fill="#907b48" filter="url(#wood)" />
    <polygon points="494,125 709,81 652,348 488,419" fill="#ad5b50" filter="url(#plaster)" />
    <polygon points="341,51 370,47 473,112 683,72 709,81 494,125 457,132" fill="#a4a4a4" />
    <polygon points="457,132 494,125 488,419 460,430" fill="#9b9b9b" />
    <path
      d="M341 51L370 47 473 112 683 72 709 81 652 348 488 419 460 430 368 297zM341 51L457 132 494 125 709 81M457 132L460 430M494 125L488 419"
      fill="none"
      stroke="#5d5a50"
      strokeWidth="0.6"
    />
  </Scene>
);

const TraceSlider = ({ id, label, round }) => (
  <>
    <TraceLabel htmlFor={id}>{label}</TraceLabel>
    <TraceRow>
      <ColorButton aria-label={label} disabled>
        <Swatch $round={round} />
        <SideCaret $dim />
      </ColorButton>
      <SliderBox>
        <Slider id={id} type="range" defaultValue={96} disabled />
        <Ticks />
      </SliderBox>
      {!round && <ColorButton aria-label="color" disabled />}
    </TraceRow>
  </>
);

const App = () => {
  const [activeTab, setActiveTab] = useState(2);
  const [selected, setSelected] = useState(16);

  return (
    <Window>
      <GlobalStyle />
      <TitleBar>
        <Icon name="logo" size={8} />
        <Title>无标题 - ARCHICAD 23</Title>
        <WindowButtons $gap={19} $end={5}>
          <PlainButton aria-label="minimize" $color="#888"><Icon name="minimize" size={11} /></PlainButton>
          <PlainButton aria-label="restore" $color="#555"><Icon name="restore" size={11} /></PlainButton>
          <PlainButton aria-label="close" $color="#666"><Icon name="close" size={11} /></PlainButton>
        </WindowButtons>
      </TitleBar>
      <MenuBar>
        <MenuList>
          {menus.map((menu) => (
            <li key={menu}><MenuLink href="#menu">{menu}</MenuLink></li>
          ))}
        </MenuList>
        <WindowButtons>
          <PlainButton aria-label="minimize view" $color="#111"><Icon name="minimize" size={8} weight={2} /></PlainButton>
          <PlainButton aria-label="restore view" $color="#111"><Icon name="restore" size={8} weight={2} /></PlainButton>
        </WindowButtons>
      </MenuBar>

      <Toolbars>
        <ToolRow $height={20}>
          <Tools items={firstRow} />
          <LayerGroup $w={56}>
            <LayerTitle>选择的图层:</LayerTitle>
            <LayerIcons>
              {["eye", "lock", "unlock"].map((name) => (
                <PlainButton key={name} $color="#b0b0b0" aria-label={name}><Icon name={name} size={9} /></PlainButton>
              ))}
            </LayerIcons>
          </LayerGroup>
          <Separator />
          <LayerGroup $w={53}>
            <LayerTitle>所有图层:</LayerTitle>
            <LayerIcons>
              {["eye", "lock"].map((name) => (
                <PlainButton key={name} $color="#2c363e" aria-label={name}><Icon name={name} size={9} /></PlainButton>
              ))}
            </LayerIcons>
          </LayerGroup>
          <Separator />
          <LayerGroup $w={18}>
            <LayerIcons>
              <PlainButton $color="#aaa" aria-label="redo layer"><Icon name="redo" size={9} /></PlainButton>
            </LayerIcons>
            <LayerIcons>
              <PlainButton $color="#aaa" aria-label="undo layer"><Icon name="undo" size={9} /></PlainButton>
            </LayerIcons>
          </LayerGroup>
        </ToolRow>
        <ToolRow $height={24}>
          <View3dButton>
            <Icon name="window3d" size={13} />
            3D窗口
          </View3dButton>
          <Tools items={secondRow} />
        </ToolRow>
      </Toolbars>

      <InfoBox>
        <InfoLabel>主要的:</InfoLabel>
        <InfoButtons>
          <InfoButton aria-label="pick"><Icon name="pick" size={13} /><SideCaret /></InfoButton>
          <InfoButton aria-label="marquee"><Icon name="marqueepick" size={13} /><SideCaret /></InfoButton>
          <InfoButton $active aria-label="magnet"><Icon name="clip" size={12} /></InfoButton>
          <InfoButton $tall aria-label="arrow"><Icon name="arrow" size={12} /><SideCaret /></InfoButton>
        </InfoButtons>
      </InfoBox>

      <Body>
        <Toolbox>
          <Grip $w={10} />
          <ToolboxTool $active aria-label="arrow"><Icon name="arrow" /></ToolboxTool>
          <ToolboxTool aria-label="marquee"><Icon name="marquee" /></ToolboxTool>
          <ToolboxLabel $spaced>设计</ToolboxLabel>
          {designTools.map((name) => (
            <ToolboxTool key={name} aria-label={name}><Icon name={name} /></ToolboxTool>
          ))}
          <ToolboxLabel>文档</ToolboxLabel>
          {documentTools.map((name) => (
            <ToolboxTool key={name} $dim aria-label={name}><Icon name={name} /></ToolboxTool>
          ))}
          <ToolboxLabel>更多</ToolboxLabel>
        </Toolbox>

        <Workspace>
          <TabBar>
            <CornerButton $w={17} aria-label="overview"><Icon name="overview" size={12} /></CornerButton>
            {tabs.map((tab, i) => (
              <Tab key={tab.name} $active={i === activeTab} onClick={() => setActiveTab(i)}>
                <Icon name={tab.icon} size={12} />
                <TabName>{tab.name}</TabName>
                {i === activeTab && <TabClose><Icon name="close" size={7} weight={3} /></TabClose>}
              </Tab>
            ))}
            <TabEnd />
            <CornerButton $w={32} $light aria-label="navigator">
              <Icon name="navhouse" size={16} />
              <Caret />
            </CornerButton>
          </TabBar>
          <Viewport>
            <Model />
            {Object.keys(edges).map((side) => (
              <EdgeHandle key={side} $side={side} />
            ))}
          </Viewport>
          <QuickOptions>
            <QuickTools>
              <ToolButton $w={15} aria-label="zoomprev"><Icon name="zoomprev" size={11} /></ToolButton>
              <ToolButton $w={14} $dim aria-label="zoomnext"><Icon name="zoomnext" size={11} /></ToolButton>
              <ToolButton $w={14} aria-label="zoomin"><Icon name="zoomin" size={11} /></ToolButton>
              <Separator $height={11} />
              <ToolButton $w={13} aria-label="pan"><Icon name="pan" size={10} /></ToolButton>
              <ToolButton $w={14} aria-label="walk"><Icon name="walk" size={9} /></ToolButton>
              <Separator $height={11} />
            </QuickTools>
            {quickOptions.map((option, i) => (
              <QuickSelector key={i} $dim={option.dim} $dimIcon={option.dimIcon}>
                <Icon name={option.icon} size={11} />
                <span>{option.text}</span>
                <SideCaret $dim={option.dim} />
              </QuickSelector>
            ))}
          </QuickOptions>
        </Workspace>

        <SidePanel>
          <Grip $w={45} />
          <TraceHeader>
            <TraceButton aria-label="trace"><Icon name="trace" size={13} /></TraceButton>
            <TraceButton $grow><Icon name="download" size={9} />在当前楼层下</TraceButton>
          </TraceHeader>
          <PanelIcons $height={24} $start={3} $split={19}>
            {["swap", "moveref", "rotref", "copyref", "refresh"].map((name) => (
              <PlainButton key={name} aria-label={name}><Icon name={name} /></PlainButton>
            ))}
          </PanelIcons>
          <TraceSlider id="reference" label="参照：" />
          <TraceSlider id="active" label="活动：" round />
          <PanelIcons $height={25} $start={22}>
            {["handref", "overlap", "mirror", "handfill"].map((name) => (
              <PlainButton key={name} aria-label={name}><Icon name={name} /></PlainButton>
            ))}
          </PanelIcons>
          <Grip $w={45} />
          <NavTabs>
            <NavTab $menu aria-label="chooser"><Icon name="orgtree" size={12} /><SideCaret /></NavTab>
            <NavTab $active aria-label="project map"><Icon name="house" size={13} /></NavTab>
            <NavTab aria-label="view map"><Icon name="story" size={13} /></NavTab>
            <NavTab aria-label="layout book"><Icon name="layout" /></NavTab>
            <NavTab aria-label="publisher"><Icon name="publish" /></NavTab>
          </NavTabs>
          <TreeFrame>
            <Tree>
              {treeItems.map(([level, icon, name, open], i) => (
                <TreeRow key={i} $level={level} $selected={i === selected} onClick={() => setSelected(i)}>
                  <TreeToggle>{open && <Icon name="chevron" size={6} weight={3} />}</TreeToggle>
                  <Icon name={icon} size={11} />
                  {name}
                </TreeRow>
              ))}
            </Tree>
            <VScroll>
              <Icon name="chevron" size={5} weight={2} />
              <Icon name="chevron" size={5} weight={2} />
            </VScroll>
            <HScroll>
              <Icon name="chevron" size={7} weight={2} />
              <Icon name="chevron" size={7} weight={2} />
            </HScroll>
          </TreeFrame>
          <ViewActions>
            <PlainButton aria-label="save view"><Icon name="saveview" size={13} /></PlainButton>
            <PlainButton aria-label="new view" $color="#b4b4b4"><Icon name="newview" size={13} /></PlainButton>
            <PlainButton aria-label="remove"><Icon name="remove" size={13} /></PlainButton>
          </ViewActions>
          <PropertiesTitle><Caret />属性</PropertiesTitle>
          <PropertyRow>
            <Icon name="persp" size={10} />
            <PropertyName>普通透视图</PropertyName>
          </PropertyRow>
          <SettingsButton>设置...</SettingsButton>
        </SidePanel>
      </Body>

      <StatusBar>
        <StatusText>点击一个元素或划取一个选择区。按住Ctrl+Shift 在元素和子元素切换选择。</StatusText>
        <Brand href="#id">
          <Icon name="stack" size={11} />
          <BrandName>GRAPHISOFT ID</BrandName>
        </Brand>
      </StatusBar>
    </Window>
  );
};

export default App;
